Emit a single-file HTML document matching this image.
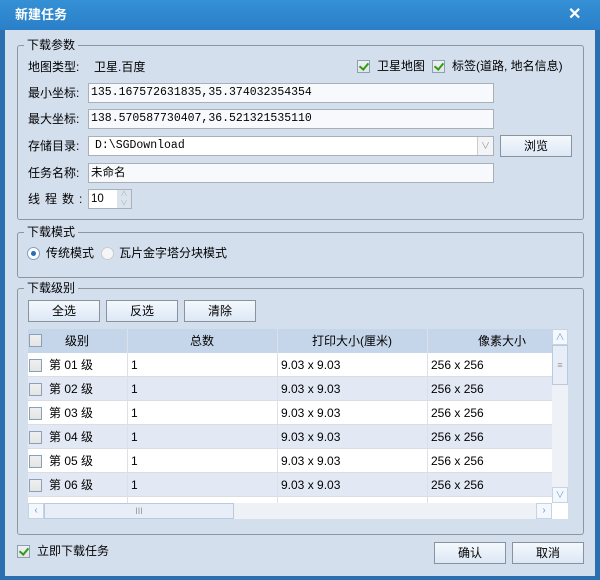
<!DOCTYPE html><html><head><meta charset="utf-8"><style>
*{box-sizing:border-box;margin:0;padding:0}
body{width:600px;height:580px;overflow:hidden;background:#2a6fb0;font-family:"Liberation Sans","Noto Sans CJK SC",sans-serif;font-size:12px;line-height:14px;color:#000;position:relative}
.a{position:absolute}
.title{left:0;top:0;width:600px;height:30px;background:linear-gradient(#3590d6,#2a80c8);}
.body{left:5px;top:30px;width:590px;height:546px;background:#d4dfee}
.grp{position:absolute;border:1px solid #8e959d;border-radius:3px}
.lg{position:absolute;background:#d4dfee;padding:0 3px;top:-8px;left:6px;line-height:14px}
.inp{position:absolute;background:#f7f9fd;border:1px solid #a9b0b8;height:20px;line-height:18px;padding-left:2px;font-family:"Liberation Mono","Noto Sans CJK SC",monospace;font-size:11.5px}
.btn{position:absolute;border:1px solid #8a939c;background:linear-gradient(#f4f8fd,#dce8f6);text-align:center;line-height:20px;height:22px}
.cb{position:absolute;width:13px;height:13px;border:1px solid #8aa0b6;background:linear-gradient(#f0f0f0,#e4e4e4)}
.cb.on::after{content:"";position:absolute;left:3px;top:0px;width:4px;height:7px;border:solid #2e9b1b;border-width:0 2px 2px 0;transform:rotate(40deg)}
.row{position:absolute;left:28px;width:524px;height:24px;border-bottom:1px solid #dadde2}
.row span{position:absolute;top:5px;line-height:14px;height:14px}
.vl{position:absolute;top:0;bottom:0;width:1px;background:#dde1e6}
</style></head><body>
<div class="a title"></div>
<div class="a" style="left:15px;top:8px;color:#fff;font-weight:bold;font-size:13px">新建任务</div>
<div class="a" style="left:568px;top:6px;color:#fff;font-weight:bold;font-size:16px;line-height:18px">✕</div>
<div class="a body"></div>

<div class="grp" style="left:17px;top:45px;width:567px;height:175px"><div class="lg">下载参数</div></div>
<div class="a" style="left:28px;top:60px">地图类型:</div>
<div class="a" style="left:94px;top:60px">卫星.百度</div>
<div class="cb on" style="left:357px;top:60px"></div><div class="a" style="left:377px;top:59px">卫星地图</div>
<div class="cb on" style="left:432px;top:60px"></div><div class="a" style="left:452px;top:59px">标签(道路, 地名信息)</div>
<div class="a" style="left:28px;top:86px">最小坐标:</div>
<div class="inp" style="left:88px;top:83px;width:406px">135.167572631835,35.374032354354</div>
<div class="a" style="left:28px;top:112px">最大坐标:</div>
<div class="inp" style="left:88px;top:109px;width:406px">138.570587730407,36.521321535110</div>
<div class="a" style="left:28px;top:139px">存储目录:</div>
<div class="inp" style="left:88px;top:136px;width:406px;background:#fff;padding-left:6px">D:\SGDownload</div>
<div class="a" style="left:477px;top:137px;width:16px;height:18px;border-left:1px solid #ccc;background:#f2f4f7;color:#999;text-align:center;font-size:9px;line-height:18px">∨</div>
<div class="btn" style="left:500px;top:135px;width:72px">浏览</div>
<div class="a" style="left:28px;top:166px">任务名称:</div>
<div class="inp" style="left:88px;top:163px;width:406px;font-family:'Liberation Sans','Noto Sans CJK SC',sans-serif">未命名</div>
<div class="a" style="left:28px;top:192px;letter-spacing:5px">线程数:</div>
<div class="inp" style="left:88px;top:189px;width:44px;background:#fff;font-family:'Liberation Sans',sans-serif">10</div>
<div class="a" style="left:117px;top:190px;width:14px;height:18px;background:#dbe3ec;color:#9fb2c8;font-size:7px;line-height:9px;text-align:center">∧<br>∨</div>

<div class="grp" style="left:17px;top:232px;width:567px;height:46px"><div class="lg">下载模式</div></div>
<div class="a" style="left:27px;top:247px;width:13px;height:13px;border-radius:50%;border:1px solid #7d9fc4;background:#fff"></div>
<div class="a" style="left:31px;top:251px;width:5px;height:5px;border-radius:50%;background:#2a6cb8"></div>
<div class="a" style="left:46px;top:246px">传统模式</div>
<div class="a" style="left:101px;top:247px;width:13px;height:13px;border-radius:50%;border:1px solid #c9ccd0;background:#f6f6f6"></div>
<div class="a" style="left:119px;top:246px">瓦片金字塔分块模式</div>

<div class="grp" style="left:17px;top:288px;width:567px;height:247px"><div class="lg">下载级别</div></div>
<div class="btn" style="left:28px;top:300px;width:72px">全选</div>
<div class="btn" style="left:106px;top:300px;width:72px">反选</div>
<div class="btn" style="left:184px;top:300px;width:72px">清除</div>

<div class="a" style="left:28px;top:329px;width:540px;height:190px;background:#fff"></div>
<div class="a" style="left:28px;top:329px;width:524px;height:24px;background:#c6d6ea"></div>
<div class="cb" style="left:29px;top:334px"></div>
<div class="a" style="left:65px;top:334px">级别</div>
<div class="a" style="left:190px;top:334px">总数</div>
<div class="a" style="left:312px;top:334px">打印大小(厘米)</div>
<div class="a" style="left:478px;top:334px">像素大小</div>
<div class="row" style="top:353px;background:#fff"><div class="cb" style="left:1px;top:6px"></div><span style="left:21px">第 01 级</span><span style="left:103px">1</span><span style="left:253px">9.03 x 9.03</span><span style="left:403px">256 x 256</span></div>
<div class="row" style="top:377px;background:#e3e9f4"><div class="cb" style="left:1px;top:6px"></div><span style="left:21px">第 02 级</span><span style="left:103px">1</span><span style="left:253px">9.03 x 9.03</span><span style="left:403px">256 x 256</span></div>
<div class="row" style="top:401px;background:#fff"><div class="cb" style="left:1px;top:6px"></div><span style="left:21px">第 03 级</span><span style="left:103px">1</span><span style="left:253px">9.03 x 9.03</span><span style="left:403px">256 x 256</span></div>
<div class="row" style="top:425px;background:#e3e9f4"><div class="cb" style="left:1px;top:6px"></div><span style="left:21px">第 04 级</span><span style="left:103px">1</span><span style="left:253px">9.03 x 9.03</span><span style="left:403px">256 x 256</span></div>
<div class="row" style="top:449px;background:#fff"><div class="cb" style="left:1px;top:6px"></div><span style="left:21px">第 05 级</span><span style="left:103px">1</span><span style="left:253px">9.03 x 9.03</span><span style="left:403px">256 x 256</span></div>
<div class="row" style="top:473px;background:#e3e9f4"><div class="cb" style="left:1px;top:6px"></div><span style="left:21px">第 06 级</span><span style="left:103px">1</span><span style="left:253px">9.03 x 9.03</span><span style="left:403px">256 x 256</span></div>
<div class="a" style="left:28px;top:329px;width:524px;height:174px">
<div class="vl" style="left:99px"></div><div class="vl" style="left:249px"></div><div class="vl" style="left:399px"></div></div>
<div class="a" style="left:552px;top:329px;width:16px;height:174px;background:#eef1f5"></div>
<div class="a" style="left:552px;top:329px;width:16px;height:16px;border:1px solid #c5d3e6;background:#f4f7fb;color:#6d9be0;font-size:9px;text-align:center;line-height:14px">∧</div>
<div class="a" style="left:552px;top:345px;width:16px;height:40px;border:1px solid #b9c9de;background:#e8eef7;color:#999;text-align:center;line-height:38px;font-size:9px">≡</div>
<div class="a" style="left:552px;top:487px;width:16px;height:16px;border:1px solid #c5d3e6;background:#f4f7fb;color:#6d9be0;font-size:9px;text-align:center;line-height:14px">∨</div>
<div class="a" style="left:28px;top:503px;width:524px;height:16px;background:#eef1f5"></div>
<div class="a" style="left:28px;top:503px;width:16px;height:16px;border:1px solid #c5d3e6;background:#f4f7fb;color:#6d9be0;text-align:center;line-height:14px;font-size:10px">‹</div>
<div class="a" style="left:44px;top:503px;width:190px;height:16px;border:1px solid #b9c9de;background:#e8eef7;color:#999;text-align:center;line-height:14px;font-size:9px">III</div>
<div class="a" style="left:536px;top:503px;width:16px;height:16px;border:1px solid #c5d3e6;background:#f4f7fb;color:#6d9be0;text-align:center;line-height:14px;font-size:10px">›</div>

<div class="cb on" style="left:17px;top:545px"></div>
<div class="a" style="left:37px;top:544px">立即下载任务</div>
<div class="btn" style="left:434px;top:542px;width:72px">确认</div>
<div class="btn" style="left:512px;top:542px;width:72px">取消</div>
</body></html>
